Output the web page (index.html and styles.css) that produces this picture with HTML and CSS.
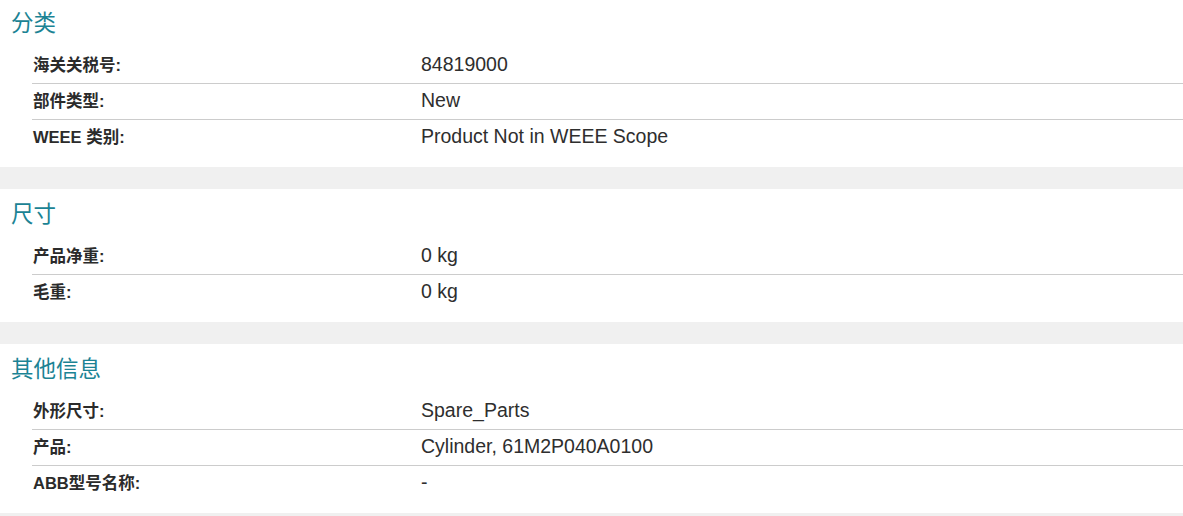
FILE: index.html
```html
<!DOCTYPE html>
<html lang="zh">
<head>
<meta charset="utf-8">
<link rel="stylesheet" href="styles.css">
</head>
<body>
<div class="page">
  <section class="group">
    <h2 class="group-title">分类</h2>
    <dl class="rows">
      <div class="row"><dt>海关关税号:</dt><dd>84819000</dd></div>
      <div class="row"><dt>部件类型:</dt><dd>New</dd></div>
      <div class="row"><dt>WEEE 类别:</dt><dd>Product Not in WEEE Scope</dd></div>
    </dl>
  </section>
  <section class="group">
    <h2 class="group-title">尺寸</h2>
    <dl class="rows">
      <div class="row"><dt>产品净重:</dt><dd>0 kg</dd></div>
      <div class="row"><dt>毛重:</dt><dd>0 kg</dd></div>
    </dl>
  </section>
  <section class="group">
    <h2 class="group-title">其他信息</h2>
    <dl class="rows">
      <div class="row"><dt>外形尺寸:</dt><dd>Spare_Parts</dd></div>
      <div class="row"><dt>产品:</dt><dd>Cylinder, 61M2P040A0100</dd></div>
      <div class="row"><dt>ABB型号名称:</dt><dd>-</dd></div>
    </dl>
  </section>
</div>
</body>
</html>
```
FILE: styles.css
```css
html, body {
  margin: 0;
  padding: 0;
  background: #f0f0f0;
}
body {
  font-family: "Liberation Sans", Arial, "Noto Sans CJK SC", sans-serif;
  color: #333;
}
.page {
  display: flex;
  flex-direction: column;
  gap: 22px;
  margin-top: -2px;
  padding-bottom: 3px;
}
.group {
  background: #fff;
  padding-bottom: 12px;
}
.group-title {
  margin: 0;
  height: 50px;
  line-height: 52px;
  padding-left: 11px;
  font-size: 22.5px;
  font-weight: normal;
  color: #1b8394;
  font-family: "Liberation Sans", Arial, "Noto Sans CJK SC", sans-serif;
}
.rows {
  margin: 0 0 0 32px;
}
.row {
  display: grid;
  grid-template-columns: 389px 1fr;
  align-items: baseline;
  box-sizing: border-box;
  height: 35px;
  padding-top: 7px;
}
.row + .row {
  border-top: 1px solid #cccccc;
  height: 36px;
}
.row dt {
  padding-left: 1px;
  font-size: 16.5px;
  line-height: 1;
  font-weight: bold;
  color: #2b2b2b;
}
.row dd {
  margin: 0;
  font-size: 19.5px;
  line-height: 1;
  color: #2e2e2e;
}
```
